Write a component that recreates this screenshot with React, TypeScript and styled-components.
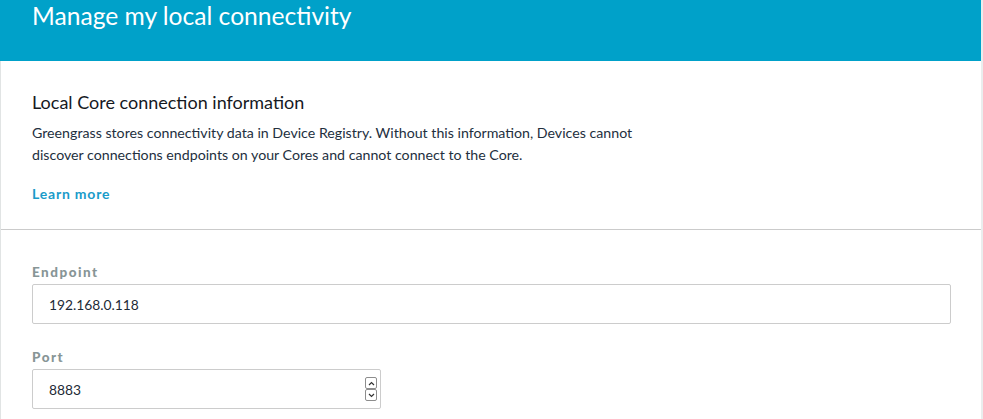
import React from "react";
import styled, { createGlobalStyle } from "styled-components";

const Global = createGlobalStyle`
  html, body { margin: 0; padding: 0; }
  body {
    background: #eaeded;
    font-family: Lato, "Open Sans", sans-serif;
    overflow: hidden;
  }
`;

const Card = styled.div`
  width: 981px;
  background: #ffffff;
`;

const Header = styled.header`
  height: 61px;
  background: #00a1c9;
  padding: 0 32px;
  box-sizing: border-box;
`;

const Title = styled.h1`
  margin: 0;
  padding-top: 1px;
  font-size: 24.6px;
  line-height: 30px;
  font-weight: 400;
  color: #ffffff;
`;

const Body = styled.div`
  border-left: 1px solid #e1e4e4;
`;

const Section = styled.section<{ $divided?: boolean }>`
  padding: ${(p) => (p.$divided ? "28px 31px 25px" : "32px 31px 28px")};
  border-bottom: ${(p) => (p.$divided ? "1px solid #cbcbcb" : "none")};
`;

const SubTitle = styled.h2`
  margin: 0 0 7px;
  font-size: 18px;
  line-height: 26px;
  font-weight: 400;
  color: #16191f;
`;

const Para = styled.p`
  margin: 0;
  width: 640px;
  font-size: 14.2px;
  line-height: 22px;
  color: #232f3e;
`;

const LearnMore = styled.a`
  display: inline-block;
  margin-top: 18px;
  font-size: 14px;
  line-height: 20px;
  font-weight: 700;
  letter-spacing: 0.8px;
  color: #1a9bc9;
  text-decoration: none;
`;

const Field = styled.div`
  display: flex;
  flex-direction: column;
  gap: 2px;
  & + & { margin-top: 23px; }
`;

const Label = styled.label`
  font-size: 13.5px;
  line-height: 20px;
  font-weight: 900;
  letter-spacing: 1.5px;
  color: #879596;
`;

const InputBox = styled.div<{ $width: number }>`
  width: ${(p) => p.$width}px;
  height: 40px;
  box-sizing: border-box;
  border: 1px solid #cccccc;
  border-radius: 2px;
  display: flex;
  align-items: center;
  padding: 0 2px 0 16px;
  font-size: 13.8px;
  color: #1e2b37;
`;

const Value = styled.span`
  flex: 1;
`;

const Spinner = styled.div`
  display: flex;
  flex-direction: column;
  width: 12px;
  margin-right: 1px;
`;

const SpinBtn = styled.div`
  height: 12px;
  border: 1px solid #8d8d8d;
  border-radius: 2px;
  box-sizing: border-box;
  display: flex;
  align-items: center;
  justify-content: center;
`;

const Caret = ({ up }: { up?: boolean }) => (
  <svg width="7" height="5" viewBox="0 0 7 5">
    <path
      d={up ? "M1 4 L3.5 1.5 L6 4" : "M1 1 L3.5 3.5 L6 1"}
      fill="none"
      stroke="#333"
      strokeWidth="1.2"
    />
  </svg>
);

export default function App() {
  return (
    <>
      <Global />
      <Card>
        <Header>
          <Title>Manage my local connectivity</Title>
        </Header>
        <Body>
          <Section $divided>
            <SubTitle>Local Core connection information</SubTitle>
            <Para>
              Greengrass stores connectivity data in Device Registry. Without this information, Devices cannot discover connections endpoints on your Cores and cannot connect to the Core.
            </Para>
            <LearnMore href="#">Learn more</LearnMore>
          </Section>
          <Section>
            <Field>
              <Label>Endpoint</Label>
              <InputBox $width={919}>
                <Value>192.168.0.118</Value>
              </InputBox>
            </Field>
            <Field>
              <Label>Port</Label>
              <InputBox $width={349}>
                <Value>8883</Value>
                <Spinner>
                  <SpinBtn><Caret up /></SpinBtn>
                  <SpinBtn><Caret /></SpinBtn>
                </Spinner>
              </InputBox>
            </Field>
          </Section>
        </Body>
      </Card>
    </>
  );
}
